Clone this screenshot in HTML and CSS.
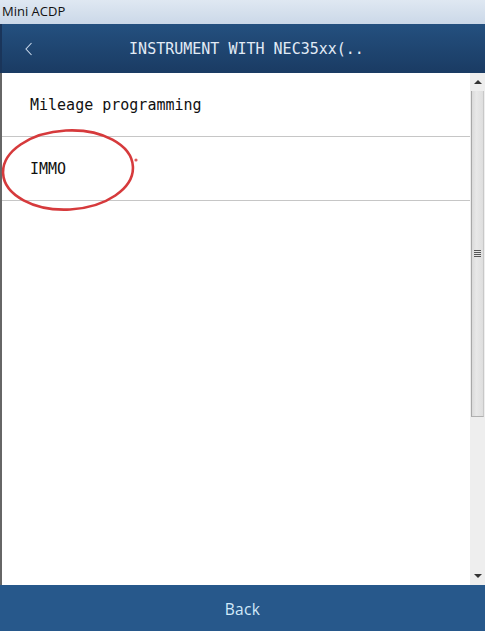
FILE: index.html
```html
<!DOCTYPE html>
<html>
<head>
<meta charset="utf-8">
<link rel="stylesheet" href="styles.css">
</head>
<body>
<div class="window">
  <div class="titlebar">Mini ACDP</div>
  <div class="header">
    <svg class="back-icon" width="10" height="14" viewBox="0 0 10 14"><path d="M7.5 1 L2 7 L7.5 13" fill="none" stroke="#c9d8ea" stroke-width="1.1"/></svg>
    <div class="header-title">INSTRUMENT WITH NEC35xx(..</div>
  </div>
  <div class="content">
    <div class="list">
      <div class="row">Mileage programming</div>
      <div class="row">IMMO</div>
    </div>
    <div class="scrollbar">
      <div class="sb-btn"><span class="tri-up"></span></div>
      <div class="sb-track">
        <div class="sb-thumb"><span class="grip"></span></div>
      </div>
      <div class="sb-btn"><span class="tri-down"></span></div>
    </div>
    <svg class="annot" width="145" height="90" viewBox="0 0 145 90">
      <ellipse cx="67" cy="42" rx="65" ry="39.5" fill="none" stroke="#d63a3c" stroke-width="2.6" transform="rotate(-3 67 42)"/>
      <circle cx="135" cy="32" r="1.6" fill="#e05a5c"/>
    </svg>
  </div>
  <div class="footer">Back</div>
</div>
</body>
</html>
```
FILE: styles.css
```css
html, body {
  margin: 0;
  padding: 0;
  background: #ffffff;
}
.window {
  width: 485px;
  height: 631px;
  display: flex;
  flex-direction: column;
  overflow: hidden;
}
.titlebar {
  height: 24px;
  flex: none;
  background: linear-gradient(#dfe8f2, #cbd8e8);
  font-family: "Open Sans", "Noto Sans", sans-serif;
  font-size: 13px;
  color: #111;
  line-height: 22px;
  padding-left: 2px;
  box-sizing: border-box;
}
.header {
  height: 49px;
  flex: none;
  display: flex;
  align-items: center;
  background: linear-gradient(#24507f, #1a3b63);
  border-left: 2px solid #1a355a;
  box-sizing: border-box;
  position: relative;
}
.back-icon {
  margin-left: 22px;
  flex: none;
}
.header-title {
  flex: 1;
  text-align: center;
  padding-right: 26px;
  font-family: "DejaVu Sans Mono", "Liberation Mono", monospace;
  font-size: 15px;
  color: #e2ebf6;
}
.content {
  flex: 1;
  display: flex;
  border-left: 2px solid #666;
  position: relative;
  background: #fff;
}
.list {
  flex: 1;
}
.row {
  height: 64px;
  border-bottom: 1px solid #c6c6c6;
  display: flex;
  align-items: center;
  padding-left: 28px;
  padding-top: 1px;
  box-sizing: border-box;
  font-family: "DejaVu Sans Mono", "Liberation Mono", monospace;
  font-size: 15px;
  color: #111;
}
.scrollbar {
  width: 15px;
  flex: none;
  display: flex;
  flex-direction: column;
  background: #eeeeee;
}
.sb-btn {
  height: 18px;
  display: flex;
  align-items: center;
  justify-content: center;
}
.tri-up {
  width: 0; height: 0;
  border-left: 4px solid transparent;
  border-right: 4px solid transparent;
  border-bottom: 4px solid #333;
}
.tri-down {
  width: 0; height: 0;
  border-left: 4px solid transparent;
  border-right: 4px solid transparent;
  border-top: 4px solid #333;
}
.sb-track {
  flex: 1;
  padding-right: 1px;
}
.sb-thumb {
  height: 326px;
  margin-left: 1px;
  background: linear-gradient(90deg, #dadada, #e8e8e8 40%, #dedede);
  border-left: 1px solid #a8a8a8;
  border-right: 1px solid #c8c8c8;
  border-bottom: 1px solid #b0b0b0;
  box-sizing: border-box;
  display: flex;
  align-items: center;
  justify-content: center;
}
.grip {
  width: 7px;
  height: 7px;
  background: repeating-linear-gradient(#555 0 1px, transparent 1px 2px);
}
.annot {
  position: absolute;
  left: -1px;
  top: 55px;
}
.footer {
  height: 46px;
  flex: none;
  background: #27588b;
  color: #d2eafa;
  font-family: "Open Sans", "Noto Sans", sans-serif;
  font-size: 15.5px;
  display: flex;
  align-items: center;
  justify-content: center;
  padding-top: 2px;
  box-sizing: border-box;
  letter-spacing: 0.3px;
}
```
